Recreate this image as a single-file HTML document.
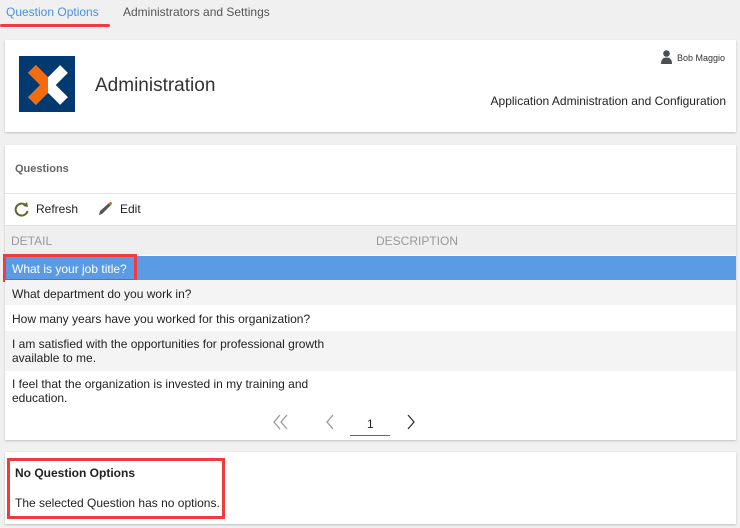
<!DOCTYPE html>
<html><head><style>
*{margin:0;padding:0;box-sizing:border-box}
body{width:740px;height:528px;background:#f0f0f0;font-family:"Liberation Sans",sans-serif;position:relative;overflow:hidden;color:#222}
.a{position:absolute}
.card{position:absolute;background:#fff;box-shadow:0 1px 2px rgba(0,0,0,.2)}
.t{font-size:12px;white-space:nowrap}
.row{position:absolute;left:0;width:731px}
</style></head><body>
<div class="a t" style="left:6px;top:5px;color:#4a90e2">Question Options</div>
<div class="a" style="left:0;top:24px;width:110px;height:3px;background:#f03c41;border-radius:2px"></div>
<div class="a t" style="left:123px;top:5px;color:#555">Administrators and Settings</div>

<div class="card" style="left:5px;top:40px;width:731px;height:92px">
 <svg class="a" style="left:14px;top:16px" width="56" height="56" viewBox="0 0 56 56">
  <defs><clipPath id="l"><rect x="0" y="0" width="29" height="56"/></clipPath></defs>
  <rect width="56" height="56" fill="#003a70"/>
  <g stroke="#fff" stroke-width="11">
   <line x1="13" y1="13" x2="45" y2="45"/><line x1="45" y1="13" x2="13" y2="45"/>
  </g>
  <g stroke="#f26b0f" stroke-width="11" clip-path="url(#l)">
   <line x1="13" y1="13" x2="45" y2="45"/><line x1="45" y1="13" x2="13" y2="45"/>
  </g>
 </svg>
 <div class="a" style="left:90px;top:35px;font-size:19px;color:#333">Administration</div>
 <svg class="a" style="left:656px;top:10px" width="11" height="14" viewBox="0 0 11 14"><circle cx="5.5" cy="3.5" r="3.3" fill="#4a4f52"/><path d="M0 14 Q0 7.5 5.5 7.5 Q11 7.5 11 14Z" fill="#4a4f52"/></svg>
 <div class="a" style="left:672px;top:13px;font-size:9px;color:#333">Bob Maggio</div>
 <div class="a t" style="right:10px;top:54px;color:#222">Application Administration and Configuration</div>
</div>

<div class="card" style="left:5px;top:145px;width:731px;height:295px">
 <div class="a t" style="left:10px;top:18px;color:#666;font-weight:bold;font-size:11px">Questions</div>
 <div class="a" style="left:0;top:48px;width:731px;height:1px;background:#e5e5e5"></div>
 <svg class="a" style="left:9px;top:56px" width="16" height="16" viewBox="0 0 16 16"><path d="M12.5 5 A6 6 0 1 0 13.5 10" fill="none" stroke="#5a6a2a" stroke-width="2"/><path d="M9 5 L14 6 L13 1Z" fill="#5a6a2a"/></svg>
 <div class="a t" style="left:31px;top:57px">Refresh</div>
 <svg class="a" style="left:92px;top:56px" width="16" height="16" viewBox="0 0 16 16"><path d="M2 14 L3 10 L12 2 L14 4 L5 13Z" fill="#555"/><circle cx="13.5" cy="2.5" r="1.5" fill="#c9772a"/></svg>
 <div class="a t" style="left:115px;top:57px">Edit</div>
 <div class="row" style="top:80px;height:30px;background:#efefef;border-top:1px solid #e0e0e0"></div>
 <div class="a t" style="left:6px;top:89px;color:#999">DETAIL</div>
 <div class="a t" style="left:371px;top:89px;color:#999">DESCRIPTION</div>
 <div class="row" style="top:111px;height:24px;background:#5b9be6"></div>
 <div class="a" style="left:-2px;top:109px;width:134px;height:28px;border:3px solid #f03c41"></div>
 <div class="a t" style="left:7px;top:117px;color:#fff">What is your job title?</div>
 <div class="row" style="top:135px;height:25px;background:#f4f4f4"></div>
 <div class="a t" style="left:7px;top:142px">What department do you work in?</div>
 <div class="a t" style="left:7px;top:167px">How many years have you worked for this organization?</div>
 <div class="row" style="top:186px;height:40px;background:#f4f4f4"></div>
 <div class="a t" style="left:7px;top:192px;line-height:14px">I am satisfied with the opportunities for professional growth<br>available to me.</div>
 <div class="a t" style="left:7px;top:232px;line-height:14px">I feel that the organization is invested in my training and<br>education.</div>
 <svg class="a" style="left:267px;top:269px" width="18" height="16"><path d="M8 1 L2 8 L8 15 M15 1 L9 8 L15 15" fill="none" stroke="#999" stroke-width="1.3"/></svg>
 <svg class="a" style="left:320px;top:269px" width="10" height="16"><path d="M8 1 L2 8 L8 15" fill="none" stroke="#999" stroke-width="1.3"/></svg>
 <div class="a t" style="left:362px;top:272px">1</div>
 <div class="a" style="left:345px;top:290px;width:40px;height:1px;background:#666"></div>
 <svg class="a" style="left:401px;top:269px" width="10" height="16"><path d="M2 1 L8 8 L2 15" fill="none" stroke="#333" stroke-width="1.3"/></svg>
</div>

<div class="card" style="left:5px;top:452px;width:731px;height:72px">
 <div class="a" style="left:2px;top:6px;width:218px;height:61px;border:3px solid #f03c41"></div>
 <div class="a t" style="left:10px;top:14px;font-weight:bold">No Question Options</div>
 <div class="a t" style="left:10px;top:44px">The selected Question has no options.</div>
</div>
</body></html>
